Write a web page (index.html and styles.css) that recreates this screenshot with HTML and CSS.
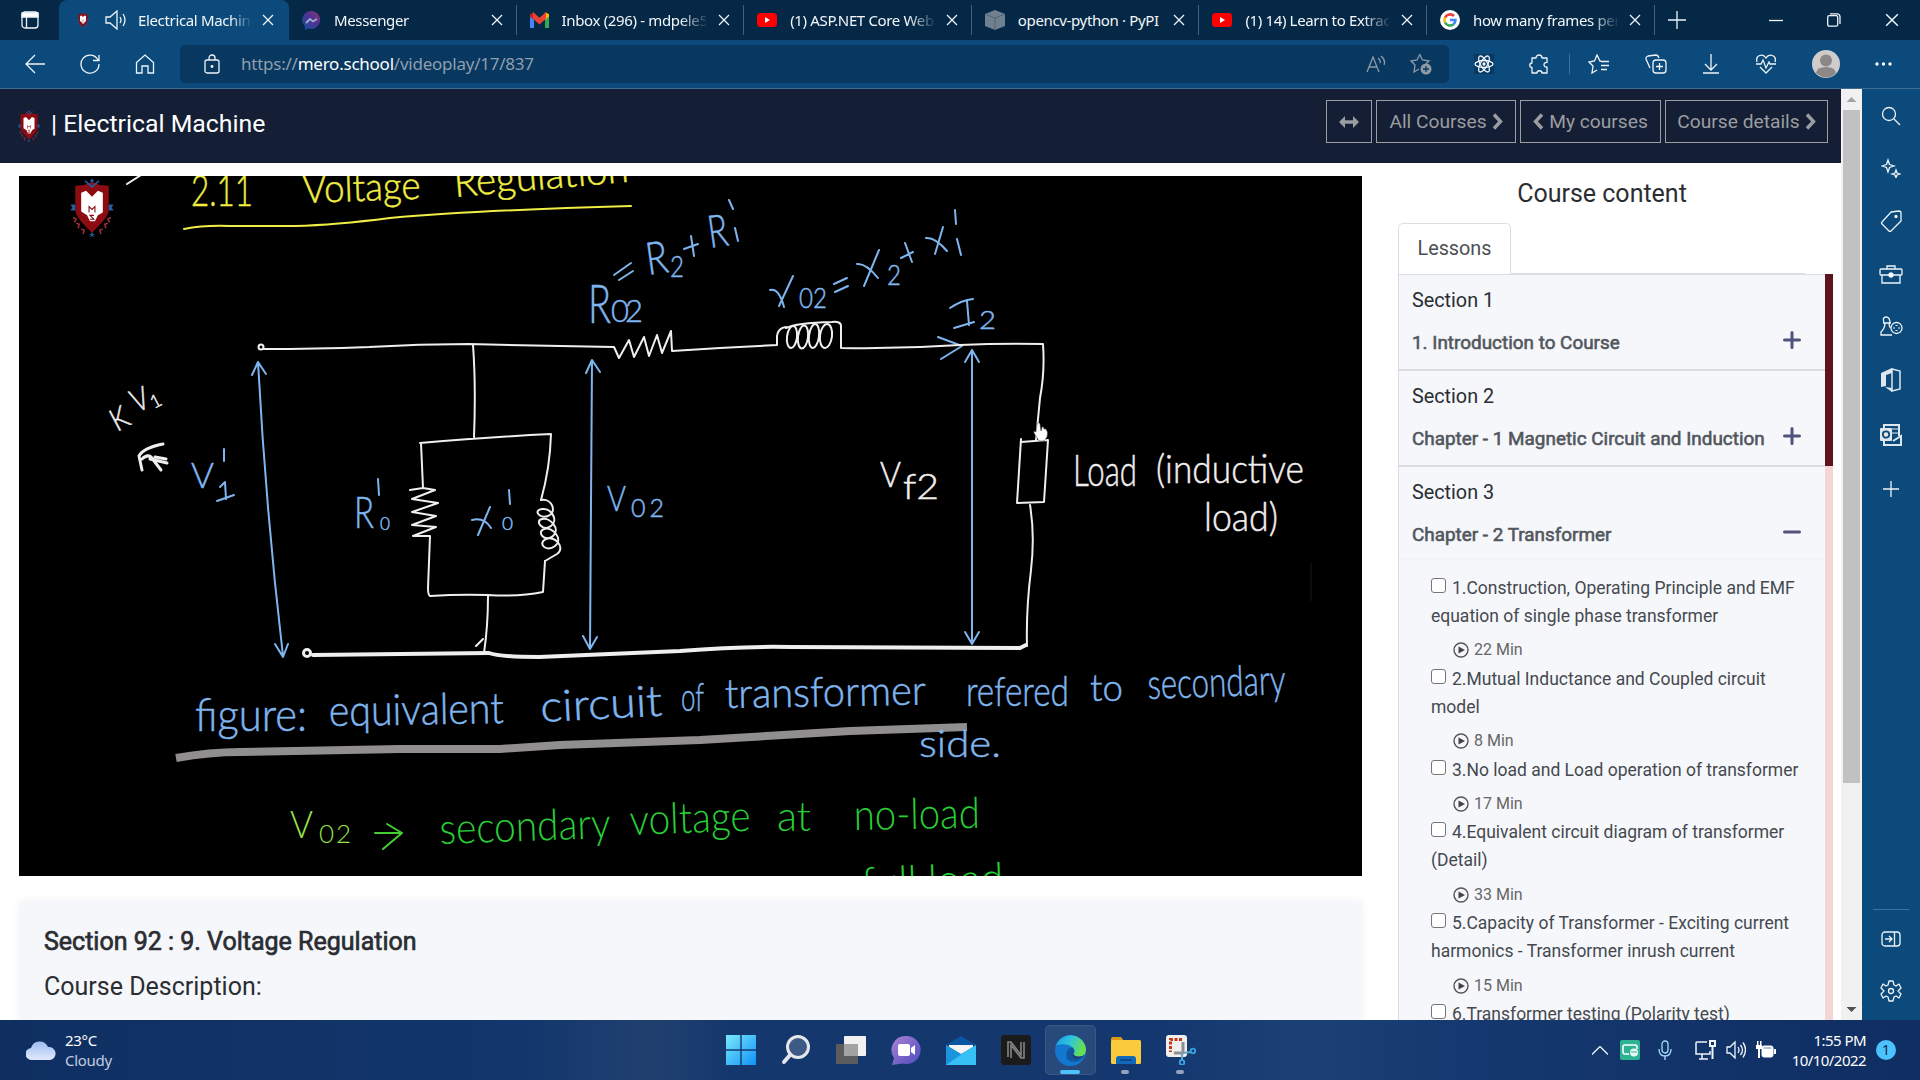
FILE: index.html
```html
<!DOCTYPE html>
<html lang="en">
<head>
<meta charset="utf-8">
<title>Electrical Machine</title>
<link rel="stylesheet" href="styles.css">
</head>
<body>
<svg class="defs" width="0" height="0" aria-hidden="true">
  <defs>
    <symbol id="x" viewBox="0 0 12 12"><path d="M1 1l10 10M11 1L1 11"/></symbol>
    <symbol id="yt" viewBox="0 0 20 20"><rect y="3" width="20" height="14" rx="3.5" fill="#f00" stroke="none"/><path d="M8 7l5 3-5 3z" fill="#fff" stroke="none"/></symbol>
    <symbol id="crest" viewBox="0 0 44 60">
      <path d="M5 8l9-1 8-3 8 3 9 1v24c0 8-9 15-17 24C14 47 5 40 5 32z" fill="#8d0c12"/>
      <path d="M11 15l5-2 6 6 6-6 5 2v20l-5 3-3 6h-5l-3-6-6-4z" fill="#fff"/>
      <path d="M19 35v-6l3 3 3-3v6M24 38h-4l4 4h-4" fill="none" stroke="#8d0c12" stroke-width="1.1"/>
      <path d="M22 0l1 2h2l-2 1 1 2-2-1-2 1 1-2-2-1h2zM22 55l1 2h2l-2 1 1 2-2-1-2 1 1-2-2-1h2zM0 27h5v6H0l2-3zM44 27h-5v6h5l-2-3z" fill="#245ea4"/>
      <path d="M15 3l7 6 7-6" fill="none" stroke="#245ea4" stroke-width="1.6"/>
      <path d="M3 40l3 2-2 3M6 46l3 1-1 4M11 52l3 1-1 4M41 40l-3 2 2 3M38 46l-3 1 1 4M33 52l-3 1 1 4" fill="none" stroke="#a6303d" stroke-width="1.5"/>
    </symbol>
    <symbol id="play" viewBox="0 0 16 16"><circle cx="8" cy="8" r="7" fill="none" stroke="#555" stroke-width="1.4"/><path d="M5.500 4.500l6.500 3.500-6.500 3.500z" fill="#444"/></symbol>
  </defs>
</svg>

<div class="browser">
  <div class="tabs">
    <div class="tab-menu"><svg class="ln" width="18" height="18" viewBox="0 0 18 18"><rect x="1" y="1" width="16" height="16" rx="3"/><path d="M1 2h16v4H1z" fill="#fff"/><path d="M5.500 6v11"/></svg></div>
    <div class="tab active">
      <svg class="fav small" width="12" height="16"><use href="#crest"/></svg>
      <svg class="ln audio" width="22" height="20" viewBox="0 0 22 20"><path d="M1 7v6h4l7 6V1L5 7zM15 7q2 3 0 6M18 4q4 6 0 12"/></svg>
      <span class="label">Electrical Machine</span><svg class="ln close" width="12" height="12"><use href="#x"/></svg>
    </div>
    <div class="tab">
      <svg class="fav" width="19" height="19" viewBox="0 0 19 19"><defs><linearGradient id="ms" x1="0" y1="1" x2="1" y2="0"><stop offset="0" stop-color="#12529a"/><stop offset=".55" stop-color="#4d3295"/><stop offset="1" stop-color="#8c3867"/></linearGradient></defs><path d="M9.500 0a9 9 0 1 1-3 17.600L3 19v-3.500A9 9 0 0 1 9.500 0z" fill="url(#ms)"/><path d="M4 12l4-4 3 2.500L15 8" fill="none" stroke="#9fb0cc" stroke-width="1.800"/></svg>
      <span class="label">Messenger</span><svg class="ln close" width="12" height="12"><use href="#x"/></svg>
    </div>
    <div class="tab">
      <svg class="fav" width="19" height="16" viewBox="0 0 19 14" preserveAspectRatio="none"><path d="M0 2v12h4V5z" fill="#4285f4"/><path d="M19 2v12h-4V5z" fill="#34a853"/><path d="M0 2l4-2v7L0 4z" fill="#c5221f"/><path d="M19 2l-4-2v7l4-3z" fill="#fbbc04"/><path d="M3 0l6.500 5L16 0v6l-6.500 5L3 6z" fill="#ea4335"/></svg>
      <span class="label">Inbox (296) - mdpele5</span><svg class="ln close" width="12" height="12"><use href="#x"/></svg>
    </div>
    <div class="tab">
      <svg class="fav" width="20" height="20"><use href="#yt"/></svg>
      <span class="label">(1) ASP.NET Core Web</span><svg class="ln close" width="12" height="12"><use href="#x"/></svg>
    </div>
    <div class="tab">
      <svg class="fav" width="20" height="20" viewBox="0 0 20 20"><path d="M10 0l10 4v12l-10 4-10-4V4z" fill="#71808e"/><path d="M0 4l10 4 10-4M10 8v12" fill="none" stroke="#526474"/></svg>
      <span class="label nofade">opencv-python · PyPI</span><svg class="ln close" width="12" height="12"><use href="#x"/></svg>
    </div>
    <div class="tab">
      <svg class="fav" width="20" height="20"><use href="#yt"/></svg>
      <span class="label">(1) 14) Learn to Extract</span><svg class="ln close" width="12" height="12"><use href="#x"/></svg>
    </div>
    <div class="tab">
      <svg class="fav" width="20" height="20" viewBox="0 0 20 20"><circle cx="10" cy="10" r="10" fill="#fff"/><g fill="none" stroke-width="2.600"><path d="M14 6a5.600 5.600 0 0 0-9 1.600" stroke="#ea4335"/><path d="M5 7.500a5.600 5.600 0 0 0 0 5" stroke="#fbbc05"/><path d="M5 12.500a5.600 5.600 0 0 0 8.500 1.800" stroke="#34a853"/><path d="M13.500 14.300a5.600 5.600 0 0 0 2-4.300H10" stroke="#4285f4"/></g></svg>
      <span class="label">how many frames per</span><svg class="ln close" width="12" height="12"><use href="#x"/></svg>
    </div>
    <div class="new-tab"><svg class="ln" width="18" height="18" viewBox="0 0 18 18"><path d="M9 0v18M0 9h18"/></svg></div>
    <div class="window-controls">
      <svg class="ln" width="14" height="14" viewBox="0 0 14 14"><path d="M0 7.500h14"/></svg>
      <svg class="ln" width="14" height="14" viewBox="0 0 14 14"><rect x=".7" y="2.700" width="10" height="10.500" rx="1.500"/><path d="M3 .8h7a3 3 0 0 1 3 3V11"/></svg>
      <svg class="ln" width="14" height="14" viewBox="0 0 12 12"><use href="#x"/></svg>
    </div>
  </div>

  <div class="toolbar">
    <div class="nav">
      <svg class="ln" width="20" height="20" viewBox="0 0 20 20"><path d="M10 1L1 10l9 9M1 10h19"/></svg>
      <svg class="ln" width="20" height="20" viewBox="0 0 20 20"><path d="M18 6a9 9 0 1 0 1 4M19 1v5.500h-6"/></svg>
      <svg class="ln" width="20" height="20" viewBox="0 0 20 20"><path d="M1.500 8.500L10 1l8.500 7.500V19H13v-7H7v7H1.500z"/></svg>
    </div>
    <div class="address">
      <svg class="ln" width="16" height="20" viewBox="0 0 16 20"><rect x="1" y="6" width="14" height="13" rx="2"/><path d="M5 6V4a3 3 0 0 1 6 0v2"/><circle cx="8" cy="12.500" r=".8" fill="#fff"/></svg>
      <span class="url">https://<b>mero.school</b>/videoplay/17/837</span>
      <svg class="ln dim" width="20" height="18" viewBox="0 0 20 18"><path d="M1 17L7 2l6 15M3.500 12h7M12 3q3 2 2 5M15 1q5 4 3 9"/></svg>
      <svg class="ln dim" width="22" height="22" viewBox="0 0 22 22"><path d="M9.500 1l3 6 6.500 1-3 3M9 16l-5 3 1-7L1 8l6-1 3-6"/><circle cx="16" cy="16" r="5.500" fill="#8f9ba6" stroke="none"/><path d="M16 13v6M13 16h6" stroke="#08375f"/></svg>
    </div>
    <div class="actions">
      <svg class="ln react" width="20" height="20" viewBox="0 0 20 20"><ellipse cx="10" cy="10" rx="9" ry="3.500"/><ellipse cx="10" cy="10" rx="9" ry="3.500" transform="rotate(60 10 10)"/><ellipse cx="10" cy="10" rx="9" ry="3.500" transform="rotate(120 10 10)"/><circle cx="10" cy="10" r="1" fill="#fff"/></svg>
      <svg class="ln" width="20" height="20" viewBox="0 0 20 20"><path d="M3 4h4c0-4 6-4 6 0h5v4.500c-4-.5-4 5 0 4.500v6h-5c0-3-5-3-5 0H3v-5.500c-3 0-3-4.500 0-4.500z" stroke-linejoin="round"/></svg>
      <i class="rule"></i>
      <svg class="ln" width="22" height="20" viewBox="0 0 22 20"><path d="M13 7h-1L9 1 6.500 7 1 8l4 4-1 7 5-3M13 7.500h8M13 11.500h8M13 15.500h6"/></svg>
      <svg class="ln" width="22" height="20" viewBox="0 0 22 20"><rect x="8" y="6" width="13" height="13" rx="3"/><path d="M14.500 9v7M11 12.500h7M5 14L1 5q-.5-2 2-3l8-1q2 0 3 3"/></svg>
      <svg class="ln" width="18" height="20" viewBox="0 0 18 20"><path d="M9 0v15M3 10l6 6 6-6M1 19h16"/></svg>
      <svg class="ln" width="22" height="20" viewBox="0 0 22 20"><path d="M2 8C0 1 8-1 11 4c3-5 11-3 9 4M5 13l6 6 6-6M1 10h5l2-4 3 8 3-6 1 2h6"/></svg>
      <svg width="28" height="28" viewBox="0 0 28 28"><circle cx="14" cy="14" r="14" fill="#cfcdcb"/><circle cx="14" cy="10.500" r="6" fill="#8b8887"/><path d="M4 23q1-6 10-6t10 6q-9 9-20 0z" fill="#8b8887"/></svg>
      <svg width="17" height="4" viewBox="0 0 17 4" fill="#fff"><circle cx="2" cy="2" r="1.700"/><circle cx="8.500" cy="2" r="1.700"/><circle cx="15" cy="2" r="1.700"/></svg>
    </div>
  </div>

  <div class="body">
    <div class="page">
      <header class="page-head">
        <svg width="22" height="32" viewBox="0 0 44 60" preserveAspectRatio="none"><use href="#crest"/></svg>
        <h1>| Electrical Machine</h1>
        <nav class="btns">
          <a class="btn sq"><svg width="20" height="12" viewBox="0 0 20 12"><path d="M2 6h16" fill="none" stroke="#9b9da1" stroke-width="3"/><path class="tip" d="M6 0v12L0 6zM14 0v12l6-6z"/></svg></a>
          <a class="btn b1">All Courses <svg width="11" height="17" viewBox="0 0 11 17"><path d="M2 1.500l6.500 7L2 15.500"/></svg></a>
          <a class="btn b2"><svg width="11" height="17" viewBox="0 0 11 17"><path d="M9 1.500l-6.500 7L9 15.500"/></svg> My courses</a>
          <a class="btn b3">Course details <svg width="11" height="17" viewBox="0 0 11 17"><path d="M2 1.500l6.500 7L2 15.500"/></svg></a>
        </nav>
      </header>
      <div class="cols">
        <main class="left">
          <svg class="video" width="1343" height="700" viewBox="19 176 1343 700">
            <rect x="19" y="176" width="1343" height="700" fill="#000"/>
            <svg x="70" y="178" width="44" height="59" viewBox="0 0 44 60"><use href="#crest"/></svg>
            <path class="w" d="M127 184l14-9"/>
            <g class="yel">
              <text x="191" y="206" font-size="44" textLength="62" lengthAdjust="spacingAndGlyphs">2.11</text>
              <text x="303" y="203" font-size="39" textLength="118" lengthAdjust="spacingAndGlyphs" transform="rotate(-2 303 203)">Voltage</text>
              <text x="455" y="197" font-size="40" textLength="175" lengthAdjust="spacingAndGlyphs" transform="rotate(-5 455 197)">Regulation</text>
              <path d="M184 229q20-4 46-3l65 0q40-1 95-8 90-8 241-12"/>
            </g>
            <g class="blue">
              <text x="588" y="323" font-size="54" textLength="23" lengthAdjust="spacingAndGlyphs">R</text>
              <text x="611" y="322" font-size="31" textLength="32">02</text>
              <path d="M614 275l17-12M619 280l14-9"/>
              <text x="648" y="275" font-size="45" textLength="22" lengthAdjust="spacingAndGlyphs" transform="rotate(-8 648 275)">R</text>
              <text x="670" y="277" font-size="30" textLength="14" lengthAdjust="spacingAndGlyphs">2</text>
              <path d="M684 249l14-5M691 236l3 20"/>
              <text x="710" y="248" font-size="45" textLength="20" lengthAdjust="spacingAndGlyphs" transform="rotate(-8 710 248)">R</text>
              <path d="M735 228l3 13M729 200l4 9M957 239l4 16M955 210l1 14"/>
              <path d="M770 290q9-2 14 17M793 276l-14 30"/>
              <text x="799" y="308" font-size="27" textLength="28" lengthAdjust="spacingAndGlyphs">02</text>
              <path d="M834 284l13-6M835 292l13-6"/>
              <path d="M857 264q9-1 21 14M879 250l-15 36"/>
              <text x="887" y="285" font-size="27" textLength="14" lengthAdjust="spacingAndGlyphs">2</text>
              <path d="M901 258l12-6M905 243l7 19"/>
              <path d="M926 238q9-1 21 13M943 227l-8 27"/>
              <path d="M950 308q12-8 23-9M967 301l2 24M954 328l20-6"/>
              <text x="979" y="329" font-size="26" textLength="17" lengthAdjust="spacingAndGlyphs">2</text>
              <path d="M938 337l24 9-21 13"/>
              <path class="arr" d="M258 362q8 150 25 294M252 375l6-13 8 12M275 644l8 13 5-13M592 361L590 649M586 373l6-13 8 12M583 636l7 13 7-12M972 350V644M965 362l7-12 7 12M965 632l7 12 7-12"/>
              <text x="191" y="488" font-size="36" textLength="23" lengthAdjust="spacingAndGlyphs">V</text>
              <path d="M224 449v12M220 487l5-5 1 17M217 501l17-6"/>
              <text x="354" y="528" font-size="44" textLength="20" lengthAdjust="spacingAndGlyphs">R</text>
              <text x="380" y="530" font-size="18" textLength="10" lengthAdjust="spacingAndGlyphs">0</text>
              <path d="M378 479l1 16M509 490l1 14M472 520q12-3 19 8M490 507l-12 28"/>
              <text x="502" y="530" font-size="18" textLength="11" lengthAdjust="spacingAndGlyphs">0</text>
              <text x="607" y="511" font-size="35" textLength="19" lengthAdjust="spacingAndGlyphs">V</text>
              <text x="631" y="517" font-size="25" textLength="33">02</text>
              <text x="195" y="731" font-size="46" textLength="112" lengthAdjust="spacingAndGlyphs">figure:</text>
              <text x="329" y="726" font-size="43" textLength="175" lengthAdjust="spacingAndGlyphs" transform="rotate(-1 329 726)">equivalent</text>
              <text x="541" y="722" font-size="43" textLength="122" lengthAdjust="spacingAndGlyphs" transform="rotate(-3 541 722)">circuit</text>
              <text x="681" y="711" font-size="40" textLength="23" lengthAdjust="spacingAndGlyphs">of</text>
              <text x="725" y="708" font-size="41" textLength="201" lengthAdjust="spacingAndGlyphs" transform="rotate(-1 725 708)">transformer</text>
              <text x="966" y="706" font-size="42" textLength="103" lengthAdjust="spacingAndGlyphs">refered</text>
              <text x="1090" y="701" font-size="38" textLength="33" lengthAdjust="spacingAndGlyphs">to</text>
              <text x="1148" y="699" font-size="42" textLength="138" lengthAdjust="spacingAndGlyphs" transform="rotate(-2 1148 699)">secondary</text>
            </g>
            <path class="marker" d="M176 758q34-6 64-6l160-3h100q30-2 60-4l140-5q70-4 150-9l117-4"/>
            <text class="bt" x="919" y="757" font-size="38" textLength="82" lengthAdjust="spacingAndGlyphs">side.</text>
            <g class="w">
              <circle cx="261" cy="347" r="2.500"/>
              <path d="M264 349q50 0 105-2 50-3 100-3 70 2 145 3l5 11 10-18 5 17 10-20 5 19 8-21 5 18 9-22 1 20 48-3 57-3v-9q1-8 9-9"/>
              <path d="M786 328q10-5 46-6 9-1 9 4v22q60 1 119-3 42-2 83-1 2 28-3 54l-4 42"/>
              <ellipse cx="792" cy="337" rx="5" ry="11" transform="rotate(7 792 337)"/><ellipse cx="803" cy="337" rx="5" ry="11.500" transform="rotate(7 803 337)"/><ellipse cx="814" cy="336" rx="5" ry="12" transform="rotate(7 814 336)"/><ellipse cx="826" cy="336" rx="6" ry="12" transform="rotate(7 826 336)"/>
              <path d="M1021 442l27-2-4 62-27 1 4-64M1030 505q5 30 1 65-5 40-4 76M473 345q3 40 1 92M420 443q70-6 131-9-1 34-10 66M421 443l2 45M410 490l13-2 12 2-23 9 26 4-26 9 24 4-24 9 24 2-23 9 17 0-2 52q0 7 2 8 30-2 58-1 30 2 55-3l2-31M488 596q0 30-4 57M476 646l7-7"/>
              <path d="M541 500c12-2 16 13 7 16s-15-6-6-7 17 11 9 17-17-5-9-7 19 10 11 17-17-4-9-7 20 10 11 17-18-3-9-7 20 9 11 15l-12 7"/>
              <path class="thick" d="M313 655q90-1 176-2 10 4 50 4 70-3 141-6 60-5 110-4l230 1 6-3"/>
              <circle cx="307" cy="653" r="3.500" stroke-width="3"/>
              <path d="M163 444q-20 4-24 12l3 14M142 459q5-5 9-2l10 13M150 459l17 4M155 457l11 2" class="scribble"/>
            </g>
            <g class="wt">
              <text x="117" y="432" font-size="31" textLength="17" lengthAdjust="spacingAndGlyphs" transform="rotate(-28 117 432)">K</text>
              <text x="136" y="413" font-size="32" textLength="17" lengthAdjust="spacingAndGlyphs" transform="rotate(-22 136 413)">V</text>
              <text x="154" y="409" font-size="18" transform="rotate(-28 154 409)">1</text>
              <text x="880" y="487" font-size="35" textLength="21" lengthAdjust="spacingAndGlyphs">V</text>
              <text x="903" y="499" font-size="35" textLength="36" lengthAdjust="spacingAndGlyphs">f2</text>
              <text x="1073" y="486" font-size="43" textLength="64" lengthAdjust="spacingAndGlyphs">Load</text>
              <text x="1156" y="483" font-size="39" textLength="148" lengthAdjust="spacingAndGlyphs">(inductive</text>
              <text x="1204" y="531" font-size="40" textLength="74" lengthAdjust="spacingAndGlyphs">load)</text>
            </g>
            <g class="grn">
              <g fill="#96e24a"><text x="290" y="838" font-size="37" textLength="23" lengthAdjust="spacingAndGlyphs">V</text><text x="319" y="843" font-size="26" textLength="32">02</text></g>
              <path d="M375 833h27M387 824l15 9-19 16"/>
              <text x="440" y="844" font-size="43" textLength="171" lengthAdjust="spacingAndGlyphs" transform="rotate(-2 440 844)">secondary</text>
              <text x="630" y="835" font-size="43" textLength="121" lengthAdjust="spacingAndGlyphs" transform="rotate(-2 630 835)">voltage</text>
              <text x="777" y="831" font-size="42" textLength="34" lengthAdjust="spacingAndGlyphs">at</text>
              <text x="854" y="830" font-size="43" textLength="126" lengthAdjust="spacingAndGlyphs" transform="rotate(-1 854 830)">no-load</text>
              <text x="862" y="898" font-size="43" textLength="142" lengthAdjust="spacingAndGlyphs" transform="rotate(-2 862 898)">full load</text>
            </g>
            <path d="M1311 563v38" stroke="#1a1a1a"/>
            <path d="M1037 424q2-3 3 0l1 7 1-4q2-1 2 2 2-1 3 2 1 1 0 6l-3 4h-5l-5-8q-1-3 2-1z" fill="#fff" stroke="#333" stroke-width=".5"/>
          </svg>
          <section class="info">
            <h2>Section 92 : 9. Voltage Regulation</h2>
            <p>Course Description:</p>
          </section>
        </main>
        <aside class="side">
          <h3>Course content</h3>
          <div class="side-tabs"><span class="side-tab">Lessons</span><i></i></div>
          <div class="acc-wrap">
            <div class="acc">
              <div class="sec"><p>Section 1</p><div class="sec-t"><span>1. Introduction to Course</span><svg width="18" height="18" viewBox="0 0 18 18"><path d="M9 1.500v15M1.500 9h15"/></svg></div></div>
              <div class="sec"><p>Section 2</p><div class="sec-t"><span>Chapter - 1 Magnetic Circuit and Induction</span><svg width="18" height="18" viewBox="0 0 18 18"><path d="M9 1.500v15M1.500 9h15"/></svg></div></div>
              <div class="sec open"><p>Section 3</p><div class="sec-t"><span>Chapter - 2 Transformer</span><svg width="18" height="18" viewBox="0 0 18 18"><path d="M1.500 9h15"/></svg></div></div>
              <ul class="lessons">
                <li><span class="box"></span>1.Construction, Operating Principle and EMF<br>equation of single phase transformer<div class="min"><svg width="16" height="16"><use href="#play"/></svg>22 Min</div></li>
                <li><span class="box"></span>2.Mutual Inductance and Coupled circuit<br>model<div class="min"><svg width="16" height="16"><use href="#play"/></svg>8 Min</div></li>
                <li><span class="box"></span>3.No load and Load operation of transformer<div class="min"><svg width="16" height="16"><use href="#play"/></svg>17 Min</div></li>
                <li><span class="box"></span>4.Equivalent circuit diagram of transformer<br>(Detail)<div class="min"><svg width="16" height="16"><use href="#play"/></svg>33 Min</div></li>
                <li><span class="box"></span>5.Capacity of Transformer - Exciting current<br>harmonics - Transformer inrush current<div class="min"><svg width="16" height="16"><use href="#play"/></svg>15 Min</div></li>
                <li><span class="box"></span>6.Transformer testing (Polarity test)</li>
              </ul>
            </div>
            <div class="acc-bar"><i></i></div>
          </div>
        </aside>
      </div>
    </div>
    <div class="scroll">
      <svg width="21" height="21" viewBox="0 0 21 21"><path d="M5.500 13l5-5 5 5z" fill="#a3a3a3"/></svg>
      <i class="thumb"></i>
      <svg width="21" height="21" viewBox="0 0 21 21"><path d="M5.500 8l5 5 5-5z" fill="#505050"/></svg>
    </div>
    <div class="rail">
      <svg class="ln" width="20" height="20" viewBox="0 0 20 20"><circle cx="8" cy="8" r="6.500"/><path d="M13 13l6 6"/></svg>
      <svg class="ln" width="20" height="20" viewBox="0 0 20 20"><path d="M7 2l1.500 4.500L13 8 8.500 9.500 7 14 5.500 9.500 1 8l4.500-1.500zM15 12l1 3 3 1-3 1-1 3-1-3-3-1 3-1z"/></svg>
      <svg class="ln" width="22" height="22" viewBox="0 0 22 22"><path d="M11 2l8-1q2 0 2 2v8L11 21q-1 1-2 0l-7-7q-1-1 0-2z"/><circle cx="16" cy="6.500" r="1" fill="#fff"/></svg>
      <svg class="ln" width="24" height="20" viewBox="0 0 24 20"><rect x="1" y="5" width="22" height="6" rx="1"/><path d="M3 11v8h18v-8M8 5V2h8v3"/><circle cx="12" cy="11" r="2" fill="#fff"/></svg>
      <svg class="ln" width="24" height="20" viewBox="0 0 24 20"><path d="M5 7Q3 1 7 1t4 6M4 7h8M6 7q0 5-4 9v3h11M10 7q0 3 1.500 5"/><circle cx="17.500" cy="12" r="5.500"/><path d="M17.500 9v1M14.500 12h1M19.500 12h1M17.500 14v1" stroke-width="2"/></svg>
      <svg width="22" height="24" viewBox="0 0 22 24"><path d="M12 1l8 2v18l-8 2z" fill="none" stroke="#dfe7ee" stroke-width="1.500"/><path d="M12 0v5L6 7v11l-5 1V5zM5 19l7 1v4z" fill="#dfe7ee"/></svg>
      <svg width="22" height="22" viewBox="0 0 22 22"><path d="M4 5V1h15v11M4 16v5h17v-9l-8 5" fill="none" stroke="#dfe7ee" stroke-width="2"/><path d="M12 5h7M12 9h7" stroke="#dfe7ee"/><rect y="4" width="12" height="13" rx="1" fill="#dfe7ee"/><circle cx="6" cy="10.500" r="3.200" fill="none" stroke="#0b4a7a" stroke-width="1.800"/></svg>
      <svg class="ln add" width="16" height="16" viewBox="0 0 16 16"><path d="M8 0v16M0 8h16"/></svg>
      <i class="rail-rule"></i>
      <svg class="ln" width="20" height="16" viewBox="0 0 20 16"><rect x="1" y="1" width="18" height="14" rx="3"/><path d="M13.500 1v14M4 8h6M8 5l3 3-3 3"/></svg>
      <svg class="ln" width="22" height="22" viewBox="0 0 22 22"><path d="M9 1h4l1 4 2 1 3-2 2 4-3 3 3 3-2 4-3-2-2 1-1 4H9l-1-4-2-1-3 2-2-4 3-3-3-3 2-4 3 2 2-1z" stroke-linejoin="round"/><circle cx="11" cy="11" r="2.500"/></svg>
    </div>
  </div>
</div>

<footer class="taskbar">
  <div class="weather">
    <svg width="30" height="19" viewBox="0 0 30 19"><defs><linearGradient id="cl" x1="0" y1="0" x2="0" y2="1"><stop offset="0" stop-color="#9cbcf3"/><stop offset="1" stop-color="#dfe9fb"/></linearGradient></defs><path d="M6 19a6 6 0 0 1-1-12 9 9 0 0 1 17-1 6.500 6.500 0 0 1 2 13z" fill="url(#cl)"/></svg>
    <div><span class="tp">23°C</span><span class="cd">Cloudy</span></div>
  </div>
  <div class="apps">
    <span><svg width="30" height="30" viewBox="0 0 30 30"><defs><linearGradient id="wn" x1="0" y1="0" x2="1" y2="1"><stop offset="0" stop-color="#7be9fd"/><stop offset="1" stop-color="#0e92f5"/></linearGradient></defs><path d="M0 0h14.300v14.300H0zM15.700 0H30v14.300H15.700zM0 15.700h14.300V30H0zM15.700 15.700H30V30H15.700z" fill="url(#wn)"/></svg></span>
    <span><svg width="30" height="30" viewBox="0 0 30 30"><circle cx="17" cy="12" r="10.500" fill="#3d5a86" stroke="#e4e6ea" stroke-width="3"/><path d="M9 20l-6 7" stroke="#e4e6ea" stroke-width="4" stroke-linecap="round"/></svg></span>
    <span><svg width="30" height="30" viewBox="0 0 30 30"><rect x="8" y="1" width="22" height="20" rx="1" fill="#f1f1f1"/><rect y="9" width="22" height="20" rx="1" fill="#5c5b5d"/><path d="M8 9h14v12H8z" fill="#a3a3a4"/></svg></span>
    <span><svg width="30" height="30" viewBox="0 0 30 30"><defs><linearGradient id="tm" x1="0" y1="0" x2="1" y2="1"><stop offset="0" stop-color="#ab83d3"/><stop offset="1" stop-color="#4c49bd"/></linearGradient></defs><path d="M15 1a14 14 0 1 1-3 27.500L1 30l2-7A14 14 0 0 1 15 1z" fill="url(#tm)"/><rect x="7" y="9" width="12" height="12" rx="2" fill="#fff"/><path d="M20 13l4-3v10l-4-3z" fill="#fff"/></svg></span>
    <span><svg width="30" height="30" viewBox="0 0 30 30"><path d="M0 10L15 1l15 9z" fill="#0a559f"/><path d="M3 10h24v14H3z" fill="#f4f4f4"/><path d="M0 10l15 9 15-9v20H0z" fill="#28a8ea"/><path d="M0 30l30-20v20z" fill="#36c0f3"/><path d="M0 10l15 9-15 11z" fill="#1b94dd"/></svg></span>
    <span><svg width="30" height="30" viewBox="0 0 30 30"><rect width="30" height="30" rx="3" fill="#1b1b1c"/><path d="M7 22V7h3l10 13V7M23 7v16h-3L10 10v13" fill="none" stroke="#858585" stroke-width="1.600"/></svg></span>
    <span class="on"><svg width="31" height="31" viewBox="0 0 30 30"><defs><linearGradient id="eg" x1="0" y1="0" x2="1" y2=".3"><stop offset="0" stop-color="#1b9de2"/><stop offset=".5" stop-color="#2fc3df"/><stop offset="1" stop-color="#66e04e"/></linearGradient></defs><circle cx="15" cy="15" r="15" fill="#1277cf"/><path d="M1 10A15 15 0 0 1 30 14q0 7-8 7-5 0-4-3 2-3-1-6-6-5-16-2z" fill="url(#eg)"/><path d="M17 12q3 3 1 6c0 3 6 4 10 2q-3 5-9 6-8 0-8-7 0-6 6-7z" fill="#12559f"/><path d="M17 18c1 4 7 4 12 1q-3 4-9 4-4-1-3-5z" fill="#203c70"/></svg><i></i></span>
    <span><svg width="30" height="30" viewBox="0 0 30 30"><path d="M0 4q0-2 2-2h8l3 4H0z" fill="#d99b12"/><rect y="5" width="30" height="24" rx="1.500" fill="#fcca3d"/><path d="M5 29v-5q0-3 3-3h14q3 0 3 3v5z" fill="#1268b9"/><path d="M9 25h12" stroke="#073f80" stroke-width="1.500"/></svg><i class="idle"></i></span>
    <span><svg width="30" height="30" viewBox="0 0 30 30"><rect width="21" height="22" rx="3" fill="#f2f0ef"/><path d="M16 4.500H4.500V17" fill="none" stroke="#c23b17" stroke-width="3" stroke-dasharray="3 1.500"/><path d="M17 7v12M8 18h10" stroke="#8b9095" stroke-width="3"/><path d="M17 18l8-1M16 19v6" stroke="#6ca5c8" stroke-width="2"/><circle cx="27" cy="16" r="2.300" fill="none" stroke="#36a3e3" stroke-width="1.800"/><circle cx="16" cy="27.500" r="2.300" fill="none" stroke="#36a3e3" stroke-width="1.800"/></svg><i class="idle"></i></span>
  </div>
  <div class="tray">
    <svg class="ln" width="16" height="9" viewBox="0 0 16 9"><path d="M0 8.500l8-8 8 8"/></svg>
    <svg width="20" height="20" viewBox="0 0 20 20"><rect width="20" height="20" rx="2" fill="#2eb392"/><path d="M9 14H5q-2 0-2-2V7q0-2 2-2h10q2 0 2 2v2" fill="none" stroke="#fff" stroke-width="1.600"/><circle cx="14" cy="12.500" r="4" fill="#e9f7f3"/><path d="M11 12h6" stroke="#2eb392"/></svg>
    <svg width="14" height="20" viewBox="0 0 14 20" fill="none" stroke="#a3dcfb" stroke-width="1.300"><rect x="4" y="1" width="6" height="12" rx="3"/><path d="M1 9q0 7 6 7t6-7M7 16v4"/></svg>
    <svg class="ln" width="21" height="20" viewBox="0 0 21 20"><path d="M12 2H2q-1 0-1 1v11h14v-3M4 19h9M7 14v5" stroke-width="1.500"/><path d="M15 1h5v5h-5zM17.500 6v13" stroke-width="2"/></svg>
    <svg class="ln" width="20" height="20" viewBox="0 0 20 20"><path d="M1 7v6h3l5 5V2L4 7zM12 7q2 3 0 6M14.500 5q4 5 0 10M17 2.500q5 7 0 15"/></svg>
    <svg width="20" height="18" viewBox="0 0 20 18"><rect x="6" y="5" width="11" height="11" rx="2" fill="#fff" stroke="#fff"/><path d="M7.500 7h8" stroke="#6d86ad"/><path d="M18 8h2v5h-2zM0 4h6v4H4v9H2V8H0zM1 0h1.500v4H1zM4 0h1.500v4H4z" fill="#fff"/></svg>
    <div class="clock"><span>1:55 PM</span><span>10/10/2022</span></div>
    <b class="badge">1</b>
  </div>
</footer>
</body>
</html>
```
FILE: styles.css
```css
* { box-sizing: border-box; margin: 0; padding: 0; }
body { width: 1920px; height: 1080px; overflow: hidden; font-family: Roboto, "Liberation Sans", sans-serif; color: #2b2d33; background: #fff; }
svg { display: block; flex: none; }
.defs { position: absolute; }
.ln { fill: none; stroke: #eef4f9; stroke-width: 1.3; }
.ln.dim { stroke: #8f9ba6; }

.browser { height: 1020px; display: flex; flex-direction: column; background: #0b4a7a; }
.tabs { height: 40px; flex: none; display: flex; align-items: center; background: #052846; font: 15px "Noto Sans", "Open Sans", sans-serif; letter-spacing: -.35px; color: #f3f6f9; }
.tab-menu { width: 59px; padding-left: 21px; }
.tab { width: 227.6px; height: 30px; padding: 0 13px 0 13px; display: flex; align-items: center; border-right: 1px solid #46617a; }
.tab.active { width: 230px; height: 40px; padding: 0 15px 0 18px; border: 0; border-radius: 8px 8px 0 0; background: #0b4a7a; }
.fav { margin-right: 13px; }
.fav.small { margin-right: 16px; }
.audio { margin-right: 11px; }
.label { flex: 1; min-width: 0; overflow: hidden; white-space: nowrap; margin-right: 12px; -webkit-mask-image: linear-gradient(90deg, #000 82%, transparent 102%); mask-image: linear-gradient(90deg, #000 82%, transparent 102%); }
.label.nofade { -webkit-mask-image: none; mask-image: none; }
.new-tab { margin-left: 13px; }
.window-controls { margin-left: auto; display: flex; gap: 44px; padding-right: 21px; }

.toolbar { height: 49px; flex: none; display: flex; align-items: center; padding-bottom: 1px; border-bottom: 1px solid #3f6d92; }
.nav { width: 180px; display: flex; gap: 35px; padding-left: 25px; }
.address { width: 1269px; height: 38px; border-radius: 5px; background: #08375f; display: flex; align-items: center; padding: 0 17px 0 24px; }
.url { flex: 1; margin-left: 21px; font: 17px "Noto Sans", "Open Sans", sans-serif; letter-spacing: -.24px; color: #8f9fae; }
.url b { font-weight: 400; color: #fff; }
.address .dim + .dim { margin-left: 24px; }
.actions { flex: 1; display: flex; align-items: center; gap: 35px; padding-left: 25px; }
.react { background: #083a63; }
.rule { width: 1px; height: 20px; margin: 0 -17px 0 -15px; background: #3f7099; }

.body { flex: 1; min-height: 0; display: flex; }
.page { width: 1841px; background: #fff; overflow: hidden; }
.page-head { height: 74px; background: #141f35; display: flex; align-items: center; padding: 0 13px 0 18px; }
.page-head h1 { font-size: 24.800px; font-weight: 400; color: #fff; margin: -5px 0 0 11px; }
.btns { margin: -9px 0 0 auto; display: flex; gap: 4px; }
.btn { height: 43px; border: 1px solid #9b9da1; display: flex; align-items: center; justify-content: center; gap: 5px; font-size: 19.200px; color: #9b9da1; white-space: nowrap; }
.btn path { fill: none; stroke: #9b9da1; stroke-width: 3.4; }
.btn path.tip { fill: #9b9da1; stroke: none; }
.sq { width: 46px; }
.b1 { width: 140px; }
.b2 { width: 141px; }
.b3 { width: 163px; }

.cols { display: flex; }
.left { width: 1343px; margin: 13px 0 0 19px; }
.info { margin-top: 25px; height: 130px; background: #f5f7fa; padding: 26px 25px; box-shadow: 0 0 10px rgba(0, 0, 0, .05); }
.info h2 { font-size: 25px; font-weight: 400; line-height: 30px; -webkit-text-stroke: .7px; }
.info p { font-size: 25px; line-height: 30px; margin-top: 15px; }

.side { width: 435px; margin-left: 36px; }
.side h3 { height: 60px; font-size: 25px; font-weight: 400; line-height: 62px; text-align: center; padding-right: 27px; }
.side-tabs { display: flex; align-items: flex-end; height: 51px; }
.side-tab { width: 113px; height: 51px; border: 1px solid #dcdfe2; border-bottom: 0; border-radius: 5px 5px 0 0; text-align: center; line-height: 49px; font-size: 19.800px; color: #4a4f55; }
.side-tabs i { width: 294px; height: 1px; background: #dcdfe2; }
.acc-wrap { display: flex; height: 746px; }
.acc { width: 427px; border-left: 1px solid #dadcde; border-top: 1px solid #dadcde; background: #f5f7fb; }
.sec { height: 96px; border-bottom: 2px solid #dadcde; padding: 11px 24px 0 13px; }
.sec.open { border-bottom: 1px solid #f1f3f7; height: 93px; }
.sec p { font-size: 19.800px; line-height: 30px; }
.sec-t { margin-top: 11px; display: flex; justify-content: space-between; align-items: center; height: 30px; font-size: 18.900px; color: #52575d; white-space: nowrap; -webkit-text-stroke: .6px; }
.sec-t svg { margin-top: -4px; }
.sec-t path { stroke: #50547b; stroke-width: 3; stroke-linecap: round; }
.lessons { list-style: none; padding: 14px 0 0 32px; font-size: 17.500px; line-height: 28px; color: #45494f; white-space: nowrap; }
.box { display: inline-block; width: 15px; height: 15px; border: 1px solid #767676; border-radius: 3px; background: #fff; margin-right: 6px; vertical-align: 1px; }
.min { display: flex; align-items: center; gap: 5px; height: 34.800px; padding: 6px 0 0 22px; font-size: 16px; color: #666; }
.acc-bar { width: 8px; background: #f3d6d4; }
.acc-bar i { display: block; height: 192px; background: #5e131d; }

.scroll { width: 21px; background: #f1f1f1; display: flex; flex-direction: column; }
.thumb { height: 673px; margin: 0 2px auto; background: #c1c1c1; }
.rail { width: 58px; display: flex; flex-direction: column; align-items: center; padding: 17px 0 18px; gap: 32px; }
.add { margin-top: 3px; }
.rail-rule { width: 36px; height: 1px; background: #3f7099; margin-top: auto; margin-bottom: -11px; }
.rail-rule + svg { margin-bottom: 1px; }

.taskbar { height: 60px; display: flex; align-items: center; background: linear-gradient(90deg, #0f2f61 0, #12366d 27%, #20406f 34%, #14376d 38%, #13376e 60%, #1b4177 68%, #14386f 77%, #0f2e62 100%); font-family: "Noto Sans", "Open Sans", sans-serif; font-size: 15px; color: #fff; }
.weather { width: 713px; display: flex; align-items: center; gap: 9px; padding-left: 26px; letter-spacing: -.3px; }
.weather span { display: block; line-height: 20px; }
.cd { color: #c3cde0; }
.apps { display: flex; }
.apps span { position: relative; width: 55px; height: 60px; display: flex; align-items: center; justify-content: center; }
.apps .on::before { content: ""; position: absolute; inset: 5px 2px; border-radius: 5px; background: rgba(255, 255, 255, .09); border: 1px solid rgba(255, 255, 255, .08); }
.apps .on svg { position: relative; }
.apps i { position: absolute; bottom: 6px; left: 17px; width: 20px; height: 4px; border-radius: 2px; background: #4cc2ff; }
.apps i.idle { left: 23px; width: 8px; background: #94a3bd; }
.tray { margin-left: auto; display: flex; align-items: center; padding-right: 24px; }
.tray svg { margin-right: 10px; }
.tray svg:nth-child(1) { margin-right: 12px; }
.tray svg:nth-child(2) { margin-right: 18px; }
.tray svg:nth-child(3) { margin-right: 23px; }
.clock { width: 80px; display: flex; flex-direction: column; text-align: right; line-height: 20px; letter-spacing: -.55px; }
.badge { width: 20px; height: 20px; margin-left: 10px; border-radius: 50%; background: #4cc2ff; color: #10243d; font-size: 14px; font-weight: 400; line-height: 20px; text-align: center; }

/* Lecture board */
.video { overflow: hidden; }
.video text { font-family: Lato, "Noto Sans", sans-serif; font-weight: 300; paint-order: stroke; stroke-width: .5px; }
.video .w, .video .yel path, .video .blue path, .video .grn path { fill: none; stroke-width: 2; stroke-linecap: round; stroke-linejoin: round; }
.video .w { stroke: #f1eeee; }
.video .thick { stroke-width: 4; }
.video .scribble { stroke-width: 3; }
.video .wt { fill: #f1eeee; stroke: #f1eeee; }
.video .yel { fill: #f0ee45; stroke: #f0ee45; }
.video .blue, .video .bt { fill: #7fb5ee; stroke: #7fb5ee; }
.video .grn { fill: #27cf35; }
.video .grn path { stroke: #45cf35; }
.video .marker { fill: none; stroke: #918e90; stroke-width: 8; }
```
